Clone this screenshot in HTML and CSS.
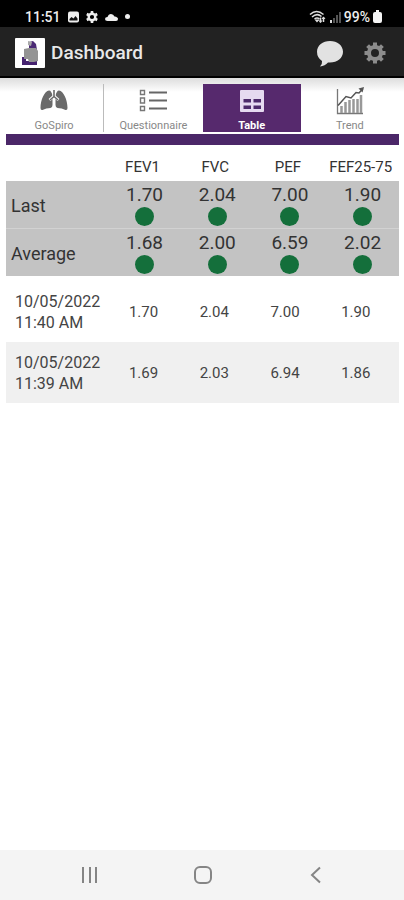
FILE: index.html
```html
<!DOCTYPE html>
<html lang="en">
  <head>
    <meta charset="UTF-8" />
    <meta name="viewport" content="width=device-width, initial-scale=1.0" />
    <link rel="stylesheet" href="styles.css">
    <title>Dashboard</title>
  </head>
  <body>
    <div class="statusbar">
      <span>11:51</span>
      <svg width="11" height="12" viewBox="0 0 11 12">
        <rect y="0.5" width="11" height="11" rx="2" fill="#eee" />
        <path d="M1.5 9.5V8l2-2 2 1.500 2-2.500 2 2.500v2z" fill="#111" />
      </svg>
      <svg width="12" height="12" viewBox="0 0 12 12">
        <circle cx="6" cy="6" r="3.300" fill="none" stroke="#eee" stroke-width="2.400" />
        <path d="M6 0v2M6 10v2M0.800 3l1.800 1M9.400 8l1.800 1M0.800 9l1.800-1M9.400 4l1.800-1" stroke="#eee" stroke-width="2.600" />
      </svg>
      <svg width="13" height="12" viewBox="0 0 13 12">
        <path d="M2.500 10Q0 10 0 8t2.500-2Q3.500 3 6 3t3.500 2.500Q13 6 13 8t-2 2z" fill="#eee" />
      </svg>
      <span class="dot"></span>
      <span class="status-right">
        <svg width="17" height="14" viewBox="0 0 17 14">
          <g fill="none" stroke="#ddd" stroke-width="1.500">
            <path d="M1 4.500q6.500-6 13.500 0M3 7q5-4.500 9.500-.5M5.500 9q2.500-2 5 0" />
            <path d="M11.500 7.500v5M14.500 7v5" />
          </g>
          <path d="M5.500 9.500h5L8 12.500zM9.500 10.500h4l-2 2.500zM12.500 9h4l-2-2.500z" fill="#ddd" />
        </svg>
        <svg width="12" height="12" viewBox="0 0 12 12">
          <path d="M1 9h2v3H1z" fill="#ddd" />
          <path d="M4 7h2v5H4zM7 4h2v8H7zM10 1h2v11h-2z" fill="#555" />
        </svg>
        <span>99%</span>
        <svg width="9" height="13" viewBox="0 0 9 13">
          <path d="M3 0h3v2h1q2 0 2 2v7q0 2-2 2H2q-2 0-2-2V4q0-2 2-2h1z" fill="#f4f4f4" />
        </svg>
      </span>
    </div>

    <header class="appbar">
      <svg class="logo" width="30" height="30" viewBox="0 0 30 30">
        <rect width="30" height="30" rx="1" fill="#fff" />
        <path d="M14 4l4-1 3 3 1 6h-8z" fill="#4b2a75" />
        <path d="M13 3l4 1-1 4-3-1z" fill="#aaa" />
        <path d="M7 19h4v4h11v4H7z" fill="#45226f" />
        <path d="M9 11l5-1h7l2 3v10l-4 1h-5l-1-3H9z" fill="#949494" />
      </svg>
      <h1>Dashboard</h1>
      <button class="icon-btn" aria-label="Messages">
        <svg width="28" height="28" viewBox="0 0 28 28">
          <path d="M14 2c7.300 0 13 4.500 13 10.700s-5.700 10.800-13 10.800h-2Q9 27 4 27.500q2.500-2.500 2-5.500Q1 18.500 1 12.700C1 6.500 6.700 2 14 2z" fill="#e2e2e2" />
        </svg>
      </button>
      <button class="icon-btn" aria-label="Settings">
        <svg width="22" height="22" viewBox="0 0 22 22">
          <circle cx="11" cy="11" r="6" fill="none" stroke="#8c8c8c" stroke-width="4" />
          <path d="M11 0.500v4M11 17.500v4M0.500 11h4M17.500 11h4M3.600 3.600l2.800 2.800M15.600 15.600l2.800 2.800M3.600 18.400l2.800-2.800M15.600 6.400l2.800-2.800" stroke="#8c8c8c" stroke-width="4" />
        </svg>
      </button>
    </header>

    <nav class="tabs">
      <button class="tab">
        <svg width="28" height="28" viewBox="0 0 28 28">
          <g fill="#6a6a6a">
            <path d="M12.500 9Q11.500 3.500 9 3.500C4.500 4 .5 13 .500 21q0 2.500 2 2 3.500-2 8-2 2-.5 2-3z" />
            <path d="M15.500 9q1-5.500 3.500-5.500C23.500 4 27.500 13 27.500 21q0 2.500-2 2-3.500-2-8-2-2-.5-2-3z" />
          </g>
          <path d="M14 9l-4.500 4M14 9l4.500 4" fill="none" stroke="#fff" stroke-width="2.800" />
          <path d="M14 3v6.500l-4 3.500M14 9.500l4 3.500" fill="none" stroke="#6a6a6a" stroke-width="1.600" />
        </svg>
        <span>GoSpiro</span>
      </button>
      <button class="tab divided">
        <svg width="28" height="28" viewBox="0 0 28 28">
          <path d="M1.500 3.500h4v4h-4zM1.500 11h4v5h-4zM1.500 19.500h4v4h-4z" fill="none" stroke="#777" stroke-width="1.400" />
          <path d="M10 5.500h18M10 13.500h18M10 21.500h18" stroke="#666" stroke-width="2" />
        </svg>
        <span>Questionnaire</span>
      </button>
      <button class="tab active" aria-current="page">
        <svg width="28" height="28" viewBox="0 0 28 28">
          <rect x="2" y="3" width="24" height="22" rx="1" fill="#e6daf0" />
          <path d="M5.500 12h7.500v3.500H5.500zM15.500 12H23v3.500h-7.500zM5.500 18.500h7.500V22H5.500zM15.500 18.500H23V22h-7.500z" fill="#4d2a6a" />
        </svg>
        <span>Table</span>
      </button>
      <button class="tab">
        <svg width="28" height="28" viewBox="0 0 28 28">
          <path d="M1.500 2v24.500H27" fill="none" stroke="#777" stroke-width="1.300" />
          <path d="M5.500 26v-7M9.500 26V15M13.500 26V13M17.500 26V12M21.500 26v-14M25 26V8" stroke="#999" stroke-width="2.500" />
          <path d="M2 18.500l8-9 5 1.500 5-5.500 3 .5 4-4.500" fill="none" stroke="#555" stroke-width="1.500" />
          <path d="M22.500 1.500L28 0l-1.500 5.500z" fill="#555" />
        </svg>
        <span>Trend</span>
      </button>
    </nav>

    <main>
      <table class="summary">
        <thead>
          <tr>
            <td class="label"></td>
            <th scope="col">FEV1</th>
            <th scope="col">FVC</th>
            <th scope="col">PEF</th>
            <th scope="col">FEF25-75</th>
          </tr>
        </thead>
        <tbody>
          <tr>
            <th class="label" scope="row">Last</th>
            <td>1.70<span class="light"></span></td>
            <td>2.04<span class="light"></span></td>
            <td>7.00<span class="light"></span></td>
            <td>1.90<span class="light"></span></td>
          </tr>
          <tr>
            <th class="label" scope="row">Average</th>
            <td>1.68<span class="light"></span></td>
            <td>2.00<span class="light"></span></td>
            <td>6.59<span class="light"></span></td>
            <td>2.02<span class="light"></span></td>
          </tr>
        </tbody>
      </table>

      <table class="readings">
        <tbody>
          <tr>
            <th class="date" scope="row">10/05/2022<br>11:40 AM</th>
            <td>1.70</td>
            <td>2.04</td>
            <td>7.00</td>
            <td>1.90</td>
            <td class="end"></td>
          </tr>
          <tr>
            <th class="date" scope="row">10/05/2022<br>11:39 AM</th>
            <td>1.69</td>
            <td>2.03</td>
            <td>6.94</td>
            <td>1.86</td>
            <td class="end"></td>
          </tr>
        </tbody>
      </table>
    </main>

    <footer class="navbar">
      <button aria-label="Recent apps">
        <svg width="18" height="18" viewBox="0 0 18 18">
          <path d="M2 1v16M9 1v16M15 1v16" stroke="#858585" stroke-width="2" />
        </svg>
      </button>
      <button aria-label="Home">
        <svg width="18" height="18" viewBox="0 0 18 18">
          <rect x="1" y="1" width="16" height="16" rx="5" fill="none" stroke="#858585" stroke-width="2" />
        </svg>
      </button>
      <button aria-label="Back">
        <svg width="18" height="18" viewBox="0 0 18 18">
          <path d="M13 1.500L5 9l8 7.500" fill="none" stroke="#858585" stroke-width="2" />
        </svg>
      </button>
    </footer>
  </body>
</html>
```

FILE: styles.css
```css
* {
  box-sizing: border-box;
  margin: 0;
  padding: 0;
}

body {
  display: flex;
  flex-direction: column;
  min-height: 100vh;
  background-color: #fff;
  font-family: Roboto, sans-serif;
  color: #333;
}

button {
  border: none;
  background: none;
  font-family: inherit;
  cursor: pointer;
}

svg {
  display: block;
}

.statusbar {
  display: flex;
  align-items: center;
  gap: 7px;
  height: 27px;
  padding: 6px 22px 0 25px;
  background-color: #000;
  color: #eee;
  font-size: 14px;
  font-weight: 500;
}
.dot {
  width: 5px;
  height: 5px;
  border-radius: 50%;
  background-color: #eee;
}
.status-right {
  display: flex;
  align-items: center;
  gap: 3px;
  margin-left: auto;
}

.appbar {
  display: flex;
  align-items: center;
  height: 51px;
  padding: 2px 18px 0 15px;
  border-bottom: 2px solid #000;
  background-color: #222;
}
.appbar h1 {
  flex: 1;
  padding-left: 6px;
  color: #e8e8e8;
  font-size: 19px;
  font-weight: 500;
}
.icon-btn {
  margin-left: 20px;
}

.tabs {
  display: flex;
  padding: 6px 5px 2px;
  background: linear-gradient(#ddd, #fff 14px);
}
.tab {
  display: flex;
  flex: 1 1 0;
  flex-direction: column;
  align-items: center;
  gap: 5px;
  padding-top: 3px;
  color: #888;
  font-size: 11px;
  line-height: 12px;
}
.divided {
  border-left: 1px solid #bbb;
}
.active {
  background-color: #56296d;
  color: #fff;
  font-weight: 700;
}

main {
  flex: 1;
  padding: 0 5px 0 6px;
}

table {
  width: 100%;
  table-layout: fixed;
  border-spacing: 0;
  text-align: center;
}
th {
  font-weight: 400;
}

.summary {
  border-top: 11px solid #4b2768;
}
.summary thead {
  font-size: 15px;
}
.summary thead tr {
  height: 36px;
}
.summary thead th {
  padding: 8px 4px 0 0;
}
.summary tbody tr {
  background-color: #c3c3c3;
  font-size: 19px;
  line-height: 24px;
}
.summary tbody td {
  padding: 2px 0;
}
.summary tbody tr + tr > * {
  border-top: 1px solid #d2d2d2;
}
.summary .label {
  width: 26%;
  padding: 3px 0 0 5px;
  text-align: left;
  font-size: 18px;
}
.light {
  display: block;
  width: 19px;
  height: 19px;
  margin: 0 auto;
  border-radius: 50%;
  background-color: #146f3b;
}

.readings {
  margin-top: 5px;
  font-size: 15px;
  color: #444;
}
.readings tr {
  height: 61px;
}
.readings tr:nth-child(even) {
  background-color: #f0f0f0;
}
.readings .date {
  width: 26%;
  padding-left: 9px;
  text-align: left;
  font-size: 16px;
  line-height: 21px;
}
.readings .end {
  width: 2%;
}

.navbar {
  display: flex;
  justify-content: space-around;
  align-items: center;
  height: 50px;
  padding: 0 32px 0 34px;
  background-color: #f4f4f4;
}
```
